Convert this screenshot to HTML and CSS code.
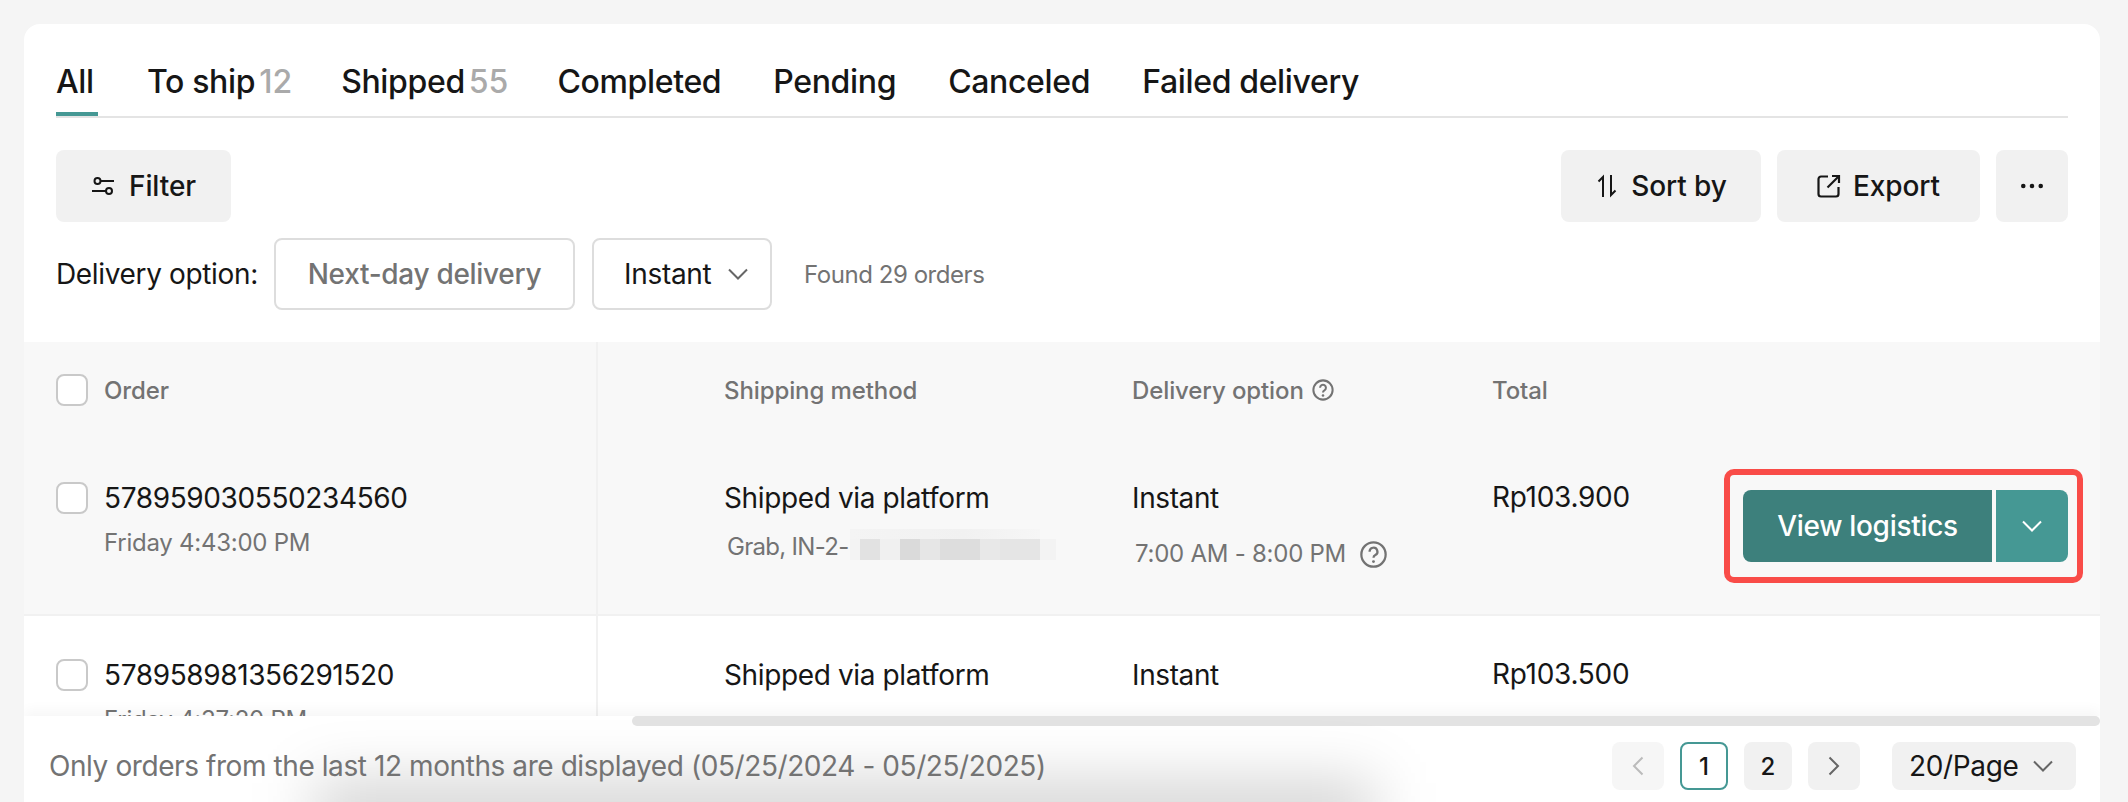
FILE: index.html
```html
<!DOCTYPE html>
<html lang="en">
<head>
<meta charset="utf-8">
<title>Orders</title>
<link rel="stylesheet" href="styles.css">
</head>
<body>
<main class="card">
  <nav class="tabs">
    <a class="tab tab-tight active">All</a>
    <a class="tab tab-tight">To ship<span class="count">12</span></a>
    <a class="tab tab-tight">Shipped<span class="count">55</span></a>
    <a class="tab">Completed</a>
    <a class="tab">Pending</a>
    <a class="tab">Canceled</a>
    <a class="tab">Failed delivery</a>
  </nav>

  <div class="toolbar">
    <button class="btn btn-filter">
      <svg class="icon" viewBox="0 0 24 24" fill="none" stroke="currentColor" stroke-width="2"><circle cx="6.5" cy="7" r="3"/><path d="M9.5 7H23"/><path d="M1 17h14"/><circle cx="18" cy="17" r="3"/></svg>
      Filter
    </button>
    <div class="toolbar-right">
      <button class="btn btn-sort">
        <svg class="icon" viewBox="0 0 24 24" fill="none" stroke="currentColor" stroke-width="2"><path d="M8 23V3L3.5 7.5"/><path d="M16 1v20l4.500-4.500"/></svg>
        Sort by
      </button>
      <button class="btn btn-export">
        <svg class="icon" viewBox="0 0 24 24" fill="none" stroke="currentColor" stroke-width="2.200"><path d="M11 2.500H4a2.500 2.500 0 0 0-2.500 2.500v15A2.500 2.500 0 0 0 4 22.500h15a2.500 2.500 0 0 0 2.500-2.500v-7"/><path d="M10.500 13.500 21.500 2.500"/><path d="M15 2h7v7"/></svg>
        Export
      </button>
      <button class="btn btn-more" aria-label="More">
        <svg class="icon" viewBox="0 0 24 24" fill="currentColor"><circle cx="2.500" cy="12" r="2.500"/><circle cx="12" cy="12" r="2.500"/><circle cx="21.500" cy="12" r="2.500"/></svg>
      </button>
    </div>
  </div>

  <div class="filter-row">
    <span class="filter-label">Delivery option:</span>
    <span class="chip chip-muted">Next-day delivery</span>
    <span class="chip chip-select">Instant
      <svg class="chev chev-grey" viewBox="0 0 20 12" fill="none" stroke="currentColor" stroke-width="2"><path d="M1 1.500l9 9 9-9"/></svg>
    </span>
    <span class="found">Found 29 orders</span>
  </div>

  <section class="table">
    <div class="row row-head">
      <div class="cell cell-order">
        <span class="check"></span><span>Order</span>
      </div>
      <div class="cell cell-ship">Shipping method</div>
      <div class="cell cell-option">Delivery option
        <svg class="help help-small" viewBox="0 0 24 24" fill="none" stroke="currentColor" stroke-width="2.200"><circle cx="12" cy="12" r="10.500"/><path d="M8.800 9.500a3.200 3.200 0 1 1 4.800 2.800c-1 .6-1.600 1.200-1.600 2.400"/><circle cx="12" cy="18" r="1.400" fill="currentColor" stroke="none"/></svg>
      </div>
      <div class="cell cell-total">Total</div>
    </div>

    <div class="row row-first">
      <div class="cell cell-order">
        <span class="check"></span>
        <div>
          <div class="main-text">578959030550234560</div>
          <div class="sub-text">Friday 4:43:00 PM</div>
        </div>
      </div>
      <div class="cell cell-ship">
        <div class="main-text">Shipped via platform</div>
        <div class="sub-text sub-track">Grab, IN-2-<span class="blurred"></span></div>
      </div>
      <div class="cell cell-option">
        <div class="main-text">Instant</div>
        <div class="sub-text sub-time">7:00 AM - 8:00 PM
          <svg class="help" viewBox="0 0 24 24" fill="none" stroke="currentColor" stroke-width="2"><circle cx="12" cy="12" r="10.800"/><path d="M8.500 9.500a3.500 3.500 0 1 1 5.200 3c-1.100.6-1.700 1.200-1.700 2.400"/><circle cx="12" cy="18.300" r="1.300" fill="currentColor" stroke="none"/></svg>
        </div>
      </div>
      <div class="cell cell-total"><div class="main-text total-text">Rp103.900</div></div>
      <div class="cell cell-action">
        <div class="action-box">
          <button class="act act-main">View logistics</button>
          <button class="act act-split" aria-label="More actions">
            <svg class="chev" viewBox="0 0 20 12" fill="none" stroke="currentColor" stroke-width="2"><path d="M1 1.500l9 9 9-9"/></svg>
          </button>
        </div>
      </div>
    </div>

    <div class="row row-second">
      <div class="cell cell-order">
        <span class="check"></span>
        <div>
          <div class="main-text">578958981356291520</div>
          <div class="sub-text">Friday 4:37:20 PM</div>
        </div>
      </div>
      <div class="cell cell-ship">
        <div class="main-text">Shipped via platform</div>
        <div class="sub-text sub-track sub-track-low">Grab, IN-2-</div>
      </div>
      <div class="cell cell-option">
        <div class="main-text">Instant</div>
      </div>
      <div class="cell cell-total"><div class="main-text total-text">Rp103.500</div></div>
    </div>
  </section>

  <footer class="footer">
    <div class="scroll-track"></div>
    <div class="footer-row">
      <span class="footer-note">Only orders from the last 12 months are displayed (05/25/2024 - 05/25/2025)</span>
      <div class="pager">
        <button class="page page-arrow page-disabled" aria-label="Previous">
          <svg class="arrow" viewBox="0 0 12 20" fill="none" stroke="currentColor" stroke-width="2"><path d="M10.500 1.500 2 10l8.500 8.500"/></svg>
        </button>
        <button class="page page-current">1</button>
        <button class="page">2</button>
        <button class="page page-arrow" aria-label="Next">
          <svg class="arrow" viewBox="0 0 12 20" fill="none" stroke="currentColor" stroke-width="2"><path d="M1.500 1.500 10 10l-8.500 8.500"/></svg>
        </button>
        <button class="page-size">20/Page
          <svg class="chev chev-grey" viewBox="0 0 20 12" fill="none" stroke="currentColor" stroke-width="2"><path d="M1 1.500l9 9 9-9"/></svg>
        </button>
      </div>
    </div>
    <div class="bottom-shade"></div>
  </footer>
</main>
</body>
</html>
```
FILE: styles.css
```css
* { box-sizing: border-box; }

html, body { margin: 0; height: 802px; overflow: hidden; }

body {
  background: #f5f5f5;
  font-family: Inter, "Liberation Sans", sans-serif;
  color: #161616;
  padding: 24px 28px 0 24px;
}

button { font: inherit; color: inherit; border: 0; padding: 0; letter-spacing: inherit; }

.card {
  position: relative;
  height: 778px;
  width: 2076px;
  background: #fff;
  border-radius: 16px 16px 0 0;
  overflow: hidden;
}

/* Tabs */
.tabs {
  display: flex;
  gap: 52px;
  height: 94px;
  margin: 0 32px;
  border-bottom: 2px solid #e4e4e4;
}
.tab {
  display: flex;
  align-items: center;
  height: 92px;
  padding-top: 24px;
  font-size: 32px;
  font-weight: 500;
  letter-spacing: -.35px;
  line-height: 40px;
}
.tab-tight { margin-right: -3px; }
.tab.active { min-width: 42px; box-shadow: inset 0 -4px 0 #459894; }
.count { margin-left: 4px; color: #aaa; letter-spacing: 0; }

/* Toolbar */
.toolbar {
  display: flex;
  justify-content: space-between;
  margin: 32px 32px 0;
}
.toolbar-right { display: flex; gap: 16px; }
.btn {
  display: flex;
  align-items: center;
  justify-content: center;
  gap: 12px;
  height: 72px;
  background: #f1f1f1;
  border-radius: 8px;
  font-size: 28px;
  font-weight: 500;
  letter-spacing: -.1px;
}
.btn-filter { width: 175px; gap: 14px; }
.btn-sort { width: 200px; }
.btn-export { width: 203px; gap: 12px; }
.btn-more { width: 72px; }
.icon { width: 24px; height: 24px; flex: none; }
.btn-more .icon { width: 22px; height: 22px; }

/* Filter row */
.filter-row {
  display: flex;
  align-items: center;
  height: 72px;
  margin: 16px 32px 0;
}
.filter-label { font-size: 28px; letter-spacing: -.35px; width: 218px; }
.chip {
  display: flex;
  align-items: center;
  height: 72px;
  border: 2px solid #ddd;
  border-radius: 8px;
  font-size: 28px;
  letter-spacing: -.3px;
}
.chip-muted { width: 301px; justify-content: center; color: #737373; font-weight: 500; }
.chip-select { width: 180px; margin-left: 17px; padding-left: 30px; gap: 17px; }
.found { margin-left: 32px; font-size: 24px; letter-spacing: -.45px; color: #737373; }

.chev { width: 20px; height: 12px; flex: none; }
.chev-grey { color: #666; }

/* Table */
.table {
  height: 374px;
  margin-top: 32px;
  overflow: hidden;
}
.row {
  display: grid;
  grid-template-columns: 574px 534px 360px 236px 1fr;
}
.row-head {
  height: 96px;
  align-items: center;
  background: #f8f8f8;
  font-size: 24px;
  font-weight: 500;
  letter-spacing: -.1px;
  color: #737373;
}
.row-first { height: 178px; background: #f8f8f8; border-bottom: 2px solid #f1f1f1; }
.row-second { height: 178px; background: #fff; }

.cell { min-width: 0; }
.cell-order {
  display: flex;
  gap: 16px;
  padding-left: 32px;
  border-right: 2px solid #f1f1f1;
  height: 100%;
}
.row-head .cell-order { align-items: center; }
.row-first .cell, .row-second .cell { padding-top: 40px; }
.row-second .cell { padding-top: 39px; }
.cell-ship { padding-left: 126px; }
.cell-option { display: block; }
.row-head .cell-option { display: flex; align-items: center; gap: 8px; }

.check {
  flex: none;
  width: 32px;
  height: 32px;
  background: #fff;
  border: 2px solid #c9c9c9;
  border-radius: 8px;
}
.row-first .check, .row-second .check { margin-top: 4px; }

.main-text { font-size: 28px; line-height: 40px; letter-spacing: -.38px; white-space: nowrap; }
.total-text { margin-top: -1px; letter-spacing: -.3px; }
.sub-text { margin-top: 9px; font-size: 24px; line-height: 32px; letter-spacing: -.25px; color: #737373; white-space: nowrap; }

.sub-track { display: flex; align-items: center; padding-left: 3px; margin-top: 13px; letter-spacing: -.7px; }
.sub-track-low { margin-top: 16px; }
.blurred {
  width: 206px;
  height: 31px;
  margin: -6px 0 0 1px;
  background:
    linear-gradient(90deg,
      #f3f3f3 0 10px, #e2e2e2 10px 30px, #f0f0f0 30px 50px, #dadada 50px 70px,
      #e6e6e6 70px 90px, #dddddd 90px 130px, #e8e8e8 130px 150px, #e5e5e5 150px 190px, #f3f3f3 190px 206px) 0 10px / 100% 21px no-repeat,
    linear-gradient(90deg, #f4f4f4, #f1f1f1 60%, #f6f6f6) 0 0 / 190px 10px no-repeat;
}

.sub-time { display: flex; align-items: center; gap: 14px; padding-left: 3px; margin-top: 20px; letter-spacing: -.25px; }
.help { width: 27px; height: 27px; flex: none; color: #737373; }
.help-small { width: 22px; height: 22px; }

.cell-action { padding-top: 0 !important; position: relative; }
.action-box {
  position: absolute;
  top: 31px;
  right: 17px;
  display: flex;
  gap: 4px;
  height: 114px;
  width: 359px;
  padding: 15px 9px 15px 13px;
  border: 6px solid #f94c48;
  border-radius: 10px;
}
.act {
  height: 72px;
  color: #fff;
  font-size: 28px;
  font-weight: 500;
  letter-spacing: -.3px;
}
.act-main { width: 249px; background: #3d807c; border-radius: 8px 0 0 8px; }
.act-split {
  display: flex;
  align-items: center;
  justify-content: center;
  width: 72px;
  background: #459894;
  border-radius: 0 8px 8px 0;
}

/* Footer */
.footer {
  position: relative;
  height: 86px;
  background: #fff;
  box-shadow: 0 -6px 12px rgba(0, 0, 0, .035);
  overflow: hidden;
}
.scroll-track {
  height: 10px;
  margin-left: 608px;
  background: #e3e3e3;
  border-radius: 5px;
}
.footer-row {
  position: relative;
  z-index: 1;
  display: flex;
  align-items: center;
  justify-content: space-between;
  height: 48px;
  margin: 16px 24px 0 25px;
}
.footer-note { font-size: 28px; letter-spacing: -.42px; color: #737373; }
.pager { display: flex; align-items: center; gap: 16px; }
.page {
  width: 48px;
  height: 48px;
  background: #f1f1f1;
  border-radius: 8px;
  font-size: 24px;
  font-weight: 500;
}
.page-arrow { display: flex; align-items: center; justify-content: center; width: 52px; color: #666; }
.page-disabled { background: #f6f6f6; color: #bbb; }
.page-current { background: #fff; border: 2px solid #459894; }
.arrow { width: 12px; height: 20px; }
.page-size {
  display: flex;
  align-items: center;
  gap: 15px;
  width: 184px;
  height: 48px;
  margin-left: 16px;
  padding-left: 17px;
  background: #f1f1f1;
  border-radius: 8px;
  font-size: 28px;
  letter-spacing: -.35px;
}

.bottom-shade {
  position: absolute;
  left: 290px;
  width: 1060px;
  bottom: -40px;
  height: 60px;
  background: rgba(0, 0, 0, .18);
  filter: blur(30px);
}
```
